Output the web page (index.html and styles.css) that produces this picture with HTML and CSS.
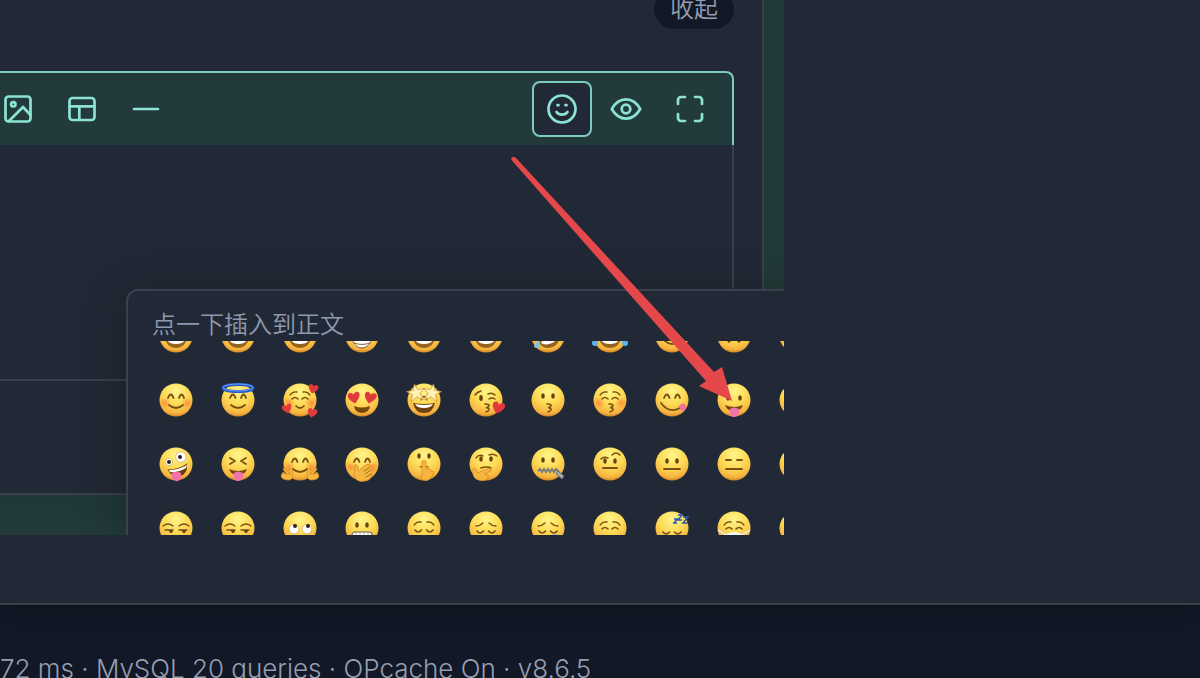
FILE: index.html
```html
<!DOCTYPE html>
<html lang="zh-CN">
<head>
    <meta charset="UTF-8">
    <meta name="viewport" content="width=device-width, initial-scale=1.0">
    <title>表情</title>
    <link rel="stylesheet" href="styles.css">
</head>
<body>

<svg class="defs" aria-hidden="true">
    <defs>
        <radialGradient id="skin" cx="50%" cy="24%" r="78%">
            <stop offset="0" stop-color="#fff58a"/>
            <stop offset="0.5" stop-color="#fdda55"/>
            <stop offset="0.85" stop-color="#f6b440"/>
            <stop offset="1" stop-color="#cf7d22"/>
        </radialGradient>
        <radialGradient id="blush">
            <stop offset="0" stop-color="#f9702a" stop-opacity="0.6"/>
            <stop offset="1" stop-color="#f9702a" stop-opacity="0"/>
        </radialGradient>
    </defs>
</svg>

<main class="post">
    <div class="shot">
        <section class="editor-card">
            <div class="card-head">
                <button class="collapse" type="button">收起</button>
            </div>

            <div class="editor">
                <div class="toolbar">
                    <div class="tools tools-left">
                        <button class="tool" type="button" aria-label="图片">
                            <svg viewBox="0 0 32 32"><rect x="3.500" y="3.500" width="25" height="25" rx="3"/><circle cx="11.300" cy="11.300" r="2.200"/><path d="M7 28 21 14l7.500 8"/></svg>
                        </button>
                        <button class="tool" type="button" aria-label="表格">
                            <svg viewBox="0 0 32 32"><rect x="3.500" y="5" width="25" height="22" rx="3"/><path d="M3.500 13.300h25M13.300 13.300V27"/></svg>
                        </button>
                        <button class="tool" type="button" aria-label="分割线">
                            <svg viewBox="0 0 32 32"><path d="M4 16h24"/></svg>
                        </button>
                    </div>
                    <div class="tools">
                        <button class="tool active" type="button" aria-label="表情">
                            <svg viewBox="0 0 32 32"><circle cx="16" cy="16" r="13.500"/><path d="M10.500 19c2.500 3.500 8.500 3.500 11 0M11.500 12.200h1M19.500 12.200h1"/></svg>
                        </button>
                        <button class="tool" type="button" aria-label="预览">
                            <svg viewBox="0 0 32 32"><path d="M1.800 16C9 3.200 23 3.200 30.200 16 23 28.800 9 28.800 1.800 16z"/><circle cx="16" cy="16" r="4.300"/></svg>
                        </button>
                        <button class="tool" type="button" aria-label="全屏">
                            <svg viewBox="0 0 32 32"><path d="M4 11V7a3 3 0 0 1 3-3h4M21 4h4a3 3 0 0 1 3 3v4M28 21v4a3 3 0 0 1-3 3h-4M11 28H7a3 3 0 0 1-3-3v-4"/></svg>
                        </button>
                    </div>
                </div>
                <textarea class="text" aria-label="正文"></textarea>
            </div>
            <div class="card-foot"></div>
        </section>

        <div class="picker">
            <p class="picker-tip">点一下插入到正文</p>
            <div class="picker-scroll">
                <div class="emoji-grid" id="emoji-grid"></div>
            </div>
        </div>

        <svg class="arrow" viewBox="0 0 224 246" aria-hidden="true">
            <path d="M1 .500Q3-1 5 1L203 215 211 210 221 244 188 229 195 224 .500 3Q0 1.500 1 .500z"/>
        </svg>
    </div>
</main>

<footer class="footer">72 ms · MySQL 20 queries · OPcache On · v8.6.5</footer>

<script>
// Drawing helpers, all centred on 0,0 with a face radius of 16
const line = (d, w = 1.7) => `<path d="${d}" fill="none" stroke="#7a4f12" stroke-width="${w}" stroke-linecap="round" stroke-linejoin="round"/>`;
const fill = (d, color) => `<path d="${d}" fill="${color}"/>`;
const heart = (x, y, s, r = 0) => `<path transform="translate(${x} ${y}) rotate(${r}) scale(${s})" d="M0 5C-8-1-5-6-2-5-1-5 0-3 0-3 0-3 1-5 3-5 7-5 7 0 0 5z" fill="#e03a3c"/>`;
const lower = (features, y = 2) => `<g transform="translate(0 ${y})">${features}</g>`;
const cheeks = '<circle cx="-11" cy="3" r="6" fill="url(#blush)"/><circle cx="11" cy="3" r="6" fill="url(#blush)"/>';
const dots = (y = -3, x = 5) => `<ellipse cx="${-x}" cy="${y}" rx="1.800" ry="2.700" fill="#6a410d"/><ellipse cx="${x}" cy="${y}" rx="1.800" ry="2.700" fill="#6a410d"/>`;
const happy = line('M-8-2Q-5-9-2.500-2M3-2Q5.500-9 8-2', 1.8);
const softEyes = line('M-8-1Q-5-4-2-1M2-1Q5-4 8-1', 1.6);
const shut = line('M-9 0Q-6 4-2.500 0M2.500 0Q6 4 9 0', 1.6);
const brows = line('M-10-5Q-7-9-3-8M3-8Q7-9 10-5', 1.3);
const sadBrows = line('M-10-5Q-6-5-3-8M3-8Q6-5 10-5', 1.3);
const smile = line('M-7 5Q0 11 7 5', 1.8);
const kiss = line('M-1 4Q5 4 2 7Q-1 8 2 8Q5 10 0 12', 1.6);
const grin = fill('M-11 2H11Q9 12 0 12T-11 2z', '#94631d') + fill('M-9 3H9Q8 8 0 8T-9 3z', '#fff');
const tongue = fill('M-9 5Q0 9 9 5 7 11 0 11T-9 5z', '#78470c') + fill('M-4 9Q0 6 5 9V13Q4 17 0 17T-4 13z', '#f372a7');
const lidEyes = line('M-13-4Q-8-8-3-4M3-4Q8-8 13-4', 1.3) + line('M-11 0H-3M3 0H11', 1.4) + fill('M-7 0h4q0 3-2 3t-2-3zM6 0h4q0 3-2 3T6 0z', '#6a410d');
const hand = d => `<path d="${d}" fill="#f7b63d" stroke="#d78927" stroke-width="0.800" stroke-linejoin="round"/>`;
const eyeball = (x, y, r, px = x, py = y) => `<circle cx="${x}" cy="${y}" r="${r}" fill="#fff" stroke="#b78a45" stroke-width="0.500"/><circle cx="${px}" cy="${py}" r="2" fill="#34220f"/>`;
const star = (x, r) => `<path transform="translate(${x} -7) rotate(${r})" d="M0-9 2.500-3 9-3 4 1 6 8 0 4-6 8-4 1-9-3-2.500-3z" fill="#fff0b5" stroke="#c98f35" stroke-width="0.700"/>`;

const faces = [
    ['笑脸', happy + grin],
    ['大笑', dots() + grin],
    ['开心', happy + grin],
    ['露齿笑', happy + fill('M-10 2H10Q9 12 0 12T-10 2z', '#fff') + line('M-10 3Q-7 12 0 12T10 3M-8 7Q0 10 8 7', 0.9)],
    ['眯眼笑', happy + grin],
    ['汗笑', happy + grin],
    ['打滚', '<g transform="rotate(-20)">' + happy + grin + '</g>' + fill('M-9 5Q-7 8-9 11-11 13-14 11-14 8-9 5z', '#79c6ec')],
    ['笑哭', happy + grin + '<ellipse cx="-15" cy="7" rx="3" ry="3" fill="#55b6e9"/><ellipse cx="15" cy="7" rx="3" ry="3" fill="#55b6e9"/>'],
    ['微笑', dots() + smile],
    ['倒脸', line('M-7-5Q0-11 7-5') + dots(4)],
    ['眨眼', dots() + smile],

    ['害羞', cheeks + happy + smile],
    ['天使', happy + smile + '<ellipse cy="-12" rx="15" ry="3.500" fill="none" stroke="#2759cc" stroke-width="3"/><ellipse cy="-12.500" rx="15" ry="3.500" fill="none" stroke="#6eadf8" stroke-width="0.900"/>'],
    ['喜爱', cheeks + brows + softEyes + line('M-4 6Q0 10 4 6') + heart(13, -11, 0.9, 12) + heart(-13, 9, 0.9, -18) + heart(12, 13, 0.9, 12)],
    ['色', heart(-8, -2, 1.1, -12) + heart(8, -2, 1.1, 12) + fill('M-8 6Q0 9 8 6 7 13 0 13T-8 6z', '#754909')],
    ['追星', line('M-3 0 0-4 3 0', 1.2) + star(-8, -10) + star(8, 10) + fill('M-11 3Q0 5 11 3 9 13 0 13T-11 3z', '#70430c') + fill('M-9 4Q0 6 9 4 7 8 0 8T-9 4z', '#fff')],
    ['飞吻', line('M-11-5Q-9-8-5-9M2-6Q6-8 9-5M3-1Q6-3 9-1', 1.5) + '<ellipse cx="-5" cy="-2" rx="1.800" ry="3" fill="#6a410d"/>' + kiss + heart(12, 8, 1.15, 14)],
    ['亲', dots(-4) + kiss],
    ['闭眼亲', cheeks + brows + softEyes + kiss],
    ['美味', happy + line('M-11 3Q-3 14 8 8') + fill('M7 6l4-3q5 3 2 7-4 3-6-4z', '#ee6ea4')],
    ['吐舌', dots(-2, 6) + tongue],
    ['眨眼吐舌', dots() + tongue],

    ['疯狂', eyeball(-7, -2, 3.6) + eyeball(5, -7, 5.3, 4, -7) + fill('M-8 6Q3 6 11 0 12 10 4 12T-8 6z', '#6b3e0b') + line('M-8 6Q3 6 11 0', 1) + fill('M-7 6Q3 6 11 1L10 4Q2 9-6 8z', '#fff') + fill('M-4 9Q0 6 5 9V14Q3 18 0 17T-4 14z', '#f372a7')],
    ['闭眼吐舌', line('M-8-6-3-3-8 0M8-6 3-3 8 0', 1.8) + tongue],
    ['拥抱', cheeks + happy + smile + hand('M-17 8l4 3-4-6 2-1 5 7-1-6q3-2 4 4 0 7-4 7-7 0-8-4zM17 8l-4 3 4-6-2-1-5 7 1-6q-3-2-4 4 0 7 4 7 7 0 8-4z')],
    ['捂嘴', cheeks + happy + hand('M-7 4q-1-4 2-3l2 6Q2 1 6 0q3 0 1 3 4-1 3 2 2 1 0 4 0 7-7 8-9 2-11-6z') + line('M2 7l5-3M3 10l6-4M4 13l5-3', 0.7)],
    ['嘘', dots(-8) + line('M-4 3Q0 1 4 3', 1.2) + hand('M-2 10V-1q0-3 2-3t2 3v6q5-1 5 2l3 1-3 6q-4 4-8 2-3-1-1-6z')],
    ['思考', line('M-10-6Q-7-10-3-8M3-9Q7-11 11-8', 1.4) + dots(-5) + line('M-5 4Q1 2 5 4', 1.5) + hand('M-13 5q2-2 3 1l1 3 10-4q5-1 4 2L-2 10l4 1q1 3-2 5-5 2-10-1-4-3-3-10z')],
    ['闭嘴', dots(-4) + '<path d="M-10 7l2-2 2 3 2-3 2 3 2-3 2 3 2-3 2 3 2-3 3 3" fill="none" stroke="#777c83" stroke-width="2"/><path d="M10 7l6 5-2 3-6-5z" fill="#aaa" stroke="#656a70"/>'],
    ['怀疑', line('M-9-5Q-6-8-2-6M2-9Q6-13 10-9', 1.5) + dots(-3) + line('M-7 4H7', 1.8)],
    ['平静', dots(-3) + line('M-8 5H8', 1.8)],
    ['无语', line('M-8-4H-3M3-4H8M-8 5H8', 1.8)],
    ['无言', dots(-3)],

    ['得意', lower(lidEyes)],
    ['不高兴', lower(lidEyes)],
    ['白眼', lower(eyeball(-6, -2, 4.8, -5, -5) + eyeball(7, -2, 4.8, 8, -5), 3)],
    ['龇牙', dots(-3) + '<rect x="-10" y="4" width="20" height="8" rx="3" fill="#fff" stroke="#71665a" stroke-width="1.200"/>' + line('M-6 4v8M-2 4v8M2 4v8M6 4v8', 0.4)],
    ['放松', lower(brows + shut)],
    ['忧郁', lower(sadBrows + shut, 3)],
    ['困', lower(sadBrows + shut, 3) + fill('M4 7q3-2 6 0v3H4z', '#77c1ee')],
    ['流口水', lower(brows + softEyes)],
    ['睡觉', lower(shut, 4) + '<path d="M2-9h3l-3 4h3M6-13h4l-4 5h4M11-11h5l-5 6h5" fill="none" stroke="#2758b3" stroke-width="1.500"/><ellipse cx="0" cy="11" rx="3" ry="2" fill="#68400f"/>'],
    ['口罩', lower(brows + softEyes) + fill('M-8 6Q0 2 8 6V14H-8z', '#f3f3ef') + '<path d="M-16 2-8 7M16 2 8 7" stroke="#ebe9e1" stroke-width="1.500"/>'],
    ['生病', lower(sadBrows + dots())]
];

const grid = document.getElementById('emoji-grid');
faces.forEach(([name, features]) => {
    const button = document.createElement('button');
    button.type = 'button';
    button.className = 'emoji';
    button.setAttribute('aria-label', name);
    button.innerHTML = `<svg viewBox="-18 -18 36 36"><circle r="16.500" fill="url(#skin)"/>${features}</svg>`;
    grid.appendChild(button);
});
</script>

</body>
</html>
```
FILE: styles.css
```css
* {
    box-sizing: border-box;
}
html {
    overflow: hidden;
}
body {
    margin: 0;
    background-color: #121826;
    color: #959eb2;
    font-family: Inter, "Noto Sans CJK SC", sans-serif;
    font-size: 24px;
}
button {
    font: inherit;
    cursor: pointer;
}
.defs {
    position: absolute;
    width: 0;
    height: 0;
}
.post {
    padding-bottom: 68px;
    background-color: #222936;
    border-bottom: 2px solid #3a414d;
    box-shadow: 0 4px 20px rgba(0, 0, 0, 0.25);
}
.shot {
    position: relative;
    max-width: 784px;
    padding: 0 20px 40px 0;
    background: linear-gradient(#213938 92%, #20373a 93%, #223b38);
    overflow: hidden;
}
.editor-card {
    background-color: #222936;
    border: solid #3a414d;
    border-width: 0 2px 2px 0;
}
.card-head {
    display: flex;
    justify-content: flex-end;
    margin-top: -11px;
    padding: 0 28px 42px 0;
}
.collapse {
    height: 40px;
    padding: 0 16px;
    border: 0;
    border-radius: 20px;
    background-color: #121826;
    color: #959eb2;
    font-weight: 350;
    line-height: 40px;
}
.editor {
    margin-right: 28px;
}
.toolbar {
    display: flex;
    justify-content: space-between;
    padding: 8px 12px 8px 0;
    background-color: #233a3c;
    border: solid #7dcbbf;
    border-width: 2px 2px 0 0;
    border-radius: 0 8px 0 0;
}
.tools {
    display: flex;
    gap: 4px;
}
.tools-left {
    margin-left: -12px;
}
.tool {
    display: flex;
    align-items: center;
    justify-content: center;
    width: 60px;
    height: 56px;
    padding: 0;
    border: 2px solid transparent;
    border-radius: 8px;
    background: none;
    color: #8de3d2;
}
.tool.active {
    background-color: #222936;
    border-color: #7dcbbf;
}
.tool svg {
    width: 32px;
    height: 32px;
    fill: none;
    stroke: currentColor;
    stroke-width: 2.7;
    stroke-linecap: round;
    stroke-linejoin: round;
}
.text {
    display: block;
    width: 100%;
    height: 234px;
    padding: 16px;
    border: 0;
    border-right: 2px solid #3a414d;
    background: none;
    color: #959eb2;
    font: inherit;
    resize: none;
    outline: none;
}
.card-foot {
    height: 114px;
    border-top: 2px solid #3a414d;
}
.picker {
    position: absolute;
    top: 289px;
    left: 126px;
    right: 0;
    bottom: 0;
    display: flex;
    flex-direction: column;
    padding-left: 18px;
    background-color: #222936;
    border: solid #3a414d;
    border-width: 2px 0 0 2px;
    border-radius: 12px 0 0 0;
    box-shadow: 0 8px 48px rgba(0, 0, 0, 0.3);
}
.picker-tip {
    margin: 0;
    padding: 18px 0 0 6px;
    color: #8e99ae;
    font-weight: 350;
    line-height: 32px;
}
.picker-scroll {
    flex: 1;
    min-height: 0;
    overflow: hidden;
}
/* the list is scrolled part of a row down */
.emoji-grid {
    display: grid;
    grid-template-columns: repeat(11, 60px);
    gap: 4px 2px;
    margin-top: -35px;
}
.emoji {
    display: flex;
    align-items: center;
    justify-content: center;
    height: 60px;
    padding: 0;
    border: 0;
    background: none;
}
.emoji svg {
    width: 36px;
    height: 36px;
    overflow: visible;
}
.arrow {
    position: absolute;
    top: 157px;
    left: 511px;
    width: 224px;
    height: 246px;
    fill: #e5484b;
    pointer-events: none;
}
.footer {
    padding-top: 48px;
    font-size: 26px;
    font-weight: 300;
    line-height: 32px;
    white-space: nowrap;
}
```
